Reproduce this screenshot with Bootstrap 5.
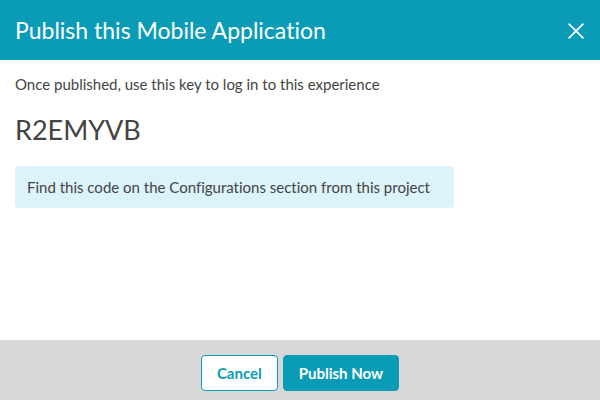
<!DOCTYPE html>
<html lang="en">
<head>
<meta charset="utf-8">
<meta name="viewport" content="width=device-width, initial-scale=1">
<title>Publish this Mobile Application</title>
<link href="https://cdn.jsdelivr.net/npm/bootstrap@5.3.0/dist/css/bootstrap.min.css" rel="stylesheet">
<style>
:root { --brand: #0a9cb7; }
body { font-family: Lato, "Liberation Sans", sans-serif; font-size: 15px; line-height: 20px; color: #444; font-variant-ligatures: none; }
.dialog-head { background: var(--brand); min-height: 60px; padding: 0 15px; }
.dialog-title { font-size: 23px; line-height: 28px; font-weight: 400; }
.dialog-close svg { display: block; }
.dialog-main { padding: 14px 15px; }
.key-code { font-size: 27px; line-height: 34px; margin: 19px 0; }
.hint { background: #dcf3fc; padding: 11px 24px 11px 12px; border-radius: 4px; }
.dialog-foot { background: #d8d8d8; min-height: 60px; gap: 5px; padding-top: 6px; }
.dialog-foot .btn { font-size: 15px; line-height: 20px; font-weight: 700; padding: 7px 15px; border-radius: 4px; border-color: var(--brand); }
.btn-plain, .btn-plain:hover { background: #fff; color: var(--brand); }
.btn-brand, .btn-brand:hover { background: var(--brand); color: #fff; }
</style>
</head>
<body>
<div class="d-flex flex-column min-vh-100">
  <header class="dialog-head d-flex align-items-center justify-content-between text-white">
    <h1 class="dialog-title mb-0">Publish this Mobile Application</h1>
    <button type="button" class="dialog-close btn p-0 border-0 text-white" aria-label="Close">
      <svg width="18" height="20" viewBox="0 0 18 20" fill="none" stroke="currentColor" stroke-width="1.8" stroke-linecap="square"><path d="M2.3 4.3l13.4 13.4M15.7 4.3L2.3 17.7"/></svg>
    </button>
  </header>
  <main class="dialog-main flex-grow-1">
    <p class="mb-0">Once published, use this key to log in to this experience</p>
    <p class="key-code">R2EMYVB</p>
    <div class="hint d-inline-block">Find this code on the Configurations section from this project</div>
  </main>
  <footer class="dialog-foot d-flex align-items-center justify-content-center">
    <button type="button" class="btn btn-plain">Cancel</button>
    <button type="button" class="btn btn-brand">Publish Now</button>
  </footer>
</div>
<script src="https://cdn.jsdelivr.net/npm/bootstrap@5.3.0/dist/js/bootstrap.bundle.min.js"></script>
</body>
</html>
